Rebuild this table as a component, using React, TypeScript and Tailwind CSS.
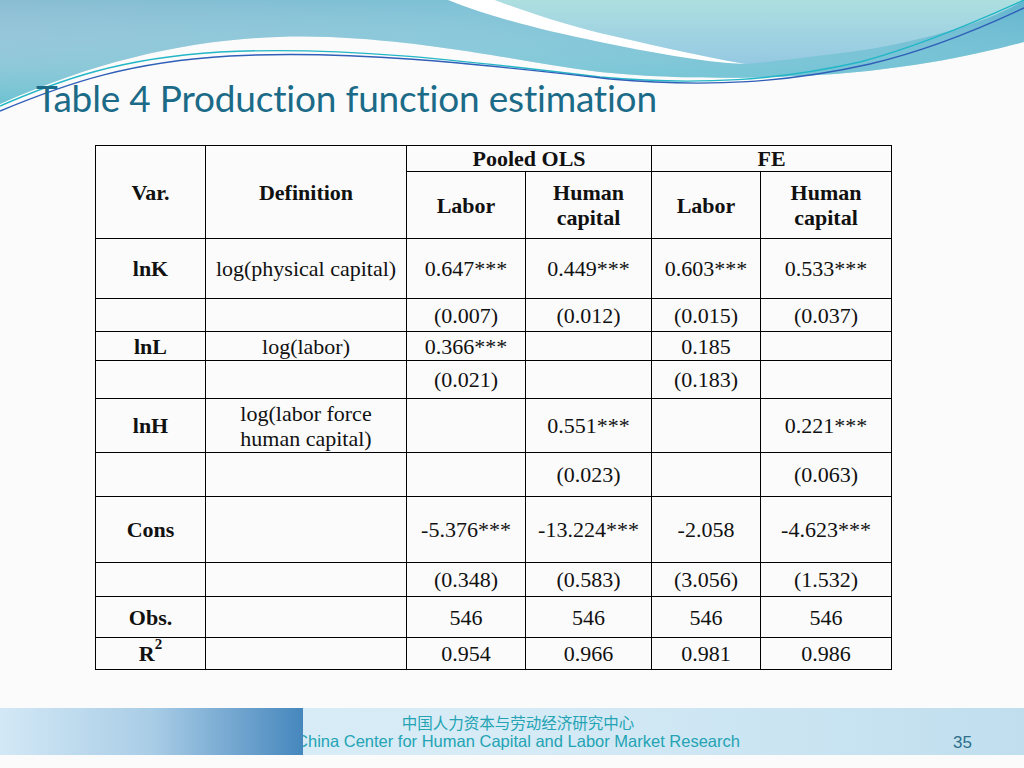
import React from "react";

type Row = {
  h: string;
  v?: string;
  d?: React.ReactNode;
  c: string[];
  line?: string;
};

const rows: Row[] = [
  { h: "h-[60px]", v: "lnK", d: "log(physical capital)", c: ["0.647***", "0.449***", "0.603***", "0.533***"] },
  { h: "h-[33px]", c: ["(0.007)", "(0.012)", "(0.015)", "(0.037)"] },
  { h: "h-[29px]", v: "lnL", d: "log(labor)", c: ["0.366***", "", "0.185", ""], line: "border-t-[#777]" },
  { h: "h-[38px]", c: ["(0.021)", "", "(0.183)", ""], line: "border-t-[#777]" },
  {
    h: "h-[54px]",
    v: "lnH",
    d: (
      <>
        log(labor force
        <br />
        human capital)
      </>
    ),
    c: ["", "0.551***", "", "0.221***"],
  },
  { h: "h-[44px]", c: ["", "(0.023)", "", "(0.063)"] },
  { h: "h-[66px]", v: "Cons", c: ["-5.376***", "-13.224***", "-2.058", "-4.623***"] },
  { h: "h-[34px]", c: ["(0.348)", "(0.583)", "(3.056)", "(1.532)"] },
  { h: "h-[41px]", v: "Obs.", c: ["546", "546", "546", "546"], line: "border-t-[#666]" },
  { h: "h-[32px]", v: "R2", c: ["0.954", "0.966", "0.981", "0.986"] },
];

function HeaderWaves() {
  return (
    <svg className="absolute left-0 top-0" width="1024" height="130" viewBox="0 0 1024 130">
      <defs>
        <linearGradient id="band" x1="0" y1="0" x2="1" y2="0">
          <stop offset="0" stopColor="#89bdd3" />
          <stop offset="0.45" stopColor="#7cc0d5" />
          <stop offset="1" stopColor="#5db3cd" />
        </linearGradient>
        <linearGradient id="bandv" x1="0" y1="0" x2="0" y2="1">
          <stop offset="0" stopColor="#ffffff" stopOpacity="0" />
          <stop offset="1" stopColor="#58c5d0" stopOpacity="0.6" />
        </linearGradient>
        <linearGradient id="light" x1="0" y1="0" x2="0" y2="1">
          <stop offset="0" stopColor="#addfe0" />
          <stop offset="1" stopColor="#95c9e2" />
        </linearGradient>
      </defs>
      <path
        d="M0,0 H1024 V42 C980,54 900,72 800,76 C700,80 640,76 600,72 C520,62 440,42 330,37 C230,33 120,50 0,104 Z"
        fill="url(#band)"
      />
      <path
        d="M0,0 H1024 V42 C980,54 900,72 800,76 C700,80 640,76 600,72 C520,62 440,42 330,37 C230,33 120,50 0,104 Z"
        fill="url(#bandv)"
      />
      <path
        d="M495,0 H1024 V0 C990,22 920,42 850,52 C800,58 770,62 745,64 C690,54 640,42 600,33 C560,23 522,10 495,0 Z"
        fill="url(#light)"
      />
      <path
        d="M448,0 H495 C522,10 560,23 600,33 C640,42 690,54 745,64 C700,62 650,52 600,42 C540,30 488,16 448,0 Z"
        fill="#ffffff"
      />
      <path
        d="M0,106 C60,80 120,58 220,52 C340,46 460,60 600,77 C700,86 780,80 860,62 C920,46 980,20 1024,0"
        fill="none"
        stroke="#23b6c6"
        strokeWidth="1.4"
      />
      <path
        d="M0,111 C70,82 130,62 230,56 C350,50 470,63 610,79 C710,88 790,82 870,64 C930,50 990,24 1024,8"
        fill="none"
        stroke="#2f5fb8"
        strokeWidth="1.4"
      />
    </svg>
  );
}

export default function App() {
  const cell = "border border-black text-center align-middle p-0";
  return (
    <div className="w-[1024px] h-[768px] bg-[#fbfbfb] overflow-hidden flex flex-col">
      <div className="relative h-[145px] shrink-0">
        <HeaderWaves />
        <h1
          className="relative pt-[75px] pl-[36px] text-[37px] leading-[46px] text-[#1b6b88] tracking-[-0.2px]"
          style={{ fontFamily: "Lato, 'Open Sans', sans-serif" }}
        >
          Table 4 Production function estimation
        </h1>
      </div>

      <div className="pl-[95px] shrink-0">
        <table
          className="table-fixed border-collapse w-[796px] text-[22px] leading-[25px] text-[#111]"
          style={{ fontFamily: "'Liberation Serif', 'Times New Roman', serif" }}
        >
          <colgroup>
            <col className="w-[110px]" />
            <col className="w-[201px]" />
            <col className="w-[119px]" />
            <col className="w-[126px]" />
            <col className="w-[109px]" />
            <col className="w-[131px]" />
          </colgroup>
          <thead>
            <tr className="h-[26px]">
              <th rowSpan={2} className={`${cell} font-bold`}>
                Var.
              </th>
              <th rowSpan={2} className={`${cell} font-bold`}>
                Definition
              </th>
              <th colSpan={2} className={`${cell} font-bold`}>
                Pooled OLS
              </th>
              <th colSpan={2} className={`${cell} font-bold`}>
                FE
              </th>
            </tr>
            <tr className="h-[67px]">
              <th className={`${cell} font-bold`}>Labor</th>
              <th className={`${cell} font-bold`}>
                Human
                <br />
                capital
              </th>
              <th className={`${cell} font-bold`}>Labor</th>
              <th className={`${cell} font-bold`}>
                Human
                <br />
                capital
              </th>
            </tr>
          </thead>
          <tbody>
            {rows.map((r, i) => (
              <tr key={i} className={r.h}>
                <td className={`${cell} font-bold ${r.line ?? ""}`}>
                  {r.v === "R2" ? (
                    <>
                      R<sup className="text-[15px] align-[5px] leading-none">2</sup>
                    </>
                  ) : (
                    r.v
                  )}
                </td>
                <td className={`${cell} ${r.line ?? ""}`}>{r.d}</td>
                {r.c.map((v, j) => (
                  <td key={j} className={`${cell} ${r.line ?? ""}`}>
                    {v}
                  </td>
                ))}
              </tr>
            ))}
          </tbody>
        </table>
      </div>

      <div className="h-[38px] shrink-0" />

      <div className="relative h-[47px] shrink-0 bg-gradient-to-r from-[#d9edf7] via-[#d6ebf6] to-[#c0deee] flex items-center">
        <div
          className="flex-1 flex flex-col items-center pl-[12px] text-[#23a3b4] leading-[19px]"
          style={{ fontFamily: "'Liberation Sans Narrow', 'Liberation Sans', 'Noto Sans CJK SC', sans-serif" }}
        >
          <span className="text-[15.5px]" style={{ fontFamily: "'Noto Sans CJK SC', sans-serif" }}>
            中国人力资本与劳动经济研究中心
          </span>
          <span className="text-[16.5px]">China Center for Human Capital and Labor Market Research</span>
        </div>
        <div
          className="absolute right-[52px] top-[22px] text-[17px] text-[#2c6f8b]"
          style={{ fontFamily: "'Liberation Sans Narrow', 'Liberation Sans', sans-serif" }}
        >
          35
        </div>
        <div className="absolute left-0 top-0 bottom-0 w-[303px] bg-gradient-to-r from-[#d3e8f6] via-[#a9cde6] to-[#4587bd]" />
      </div>
    </div>
  );
}
